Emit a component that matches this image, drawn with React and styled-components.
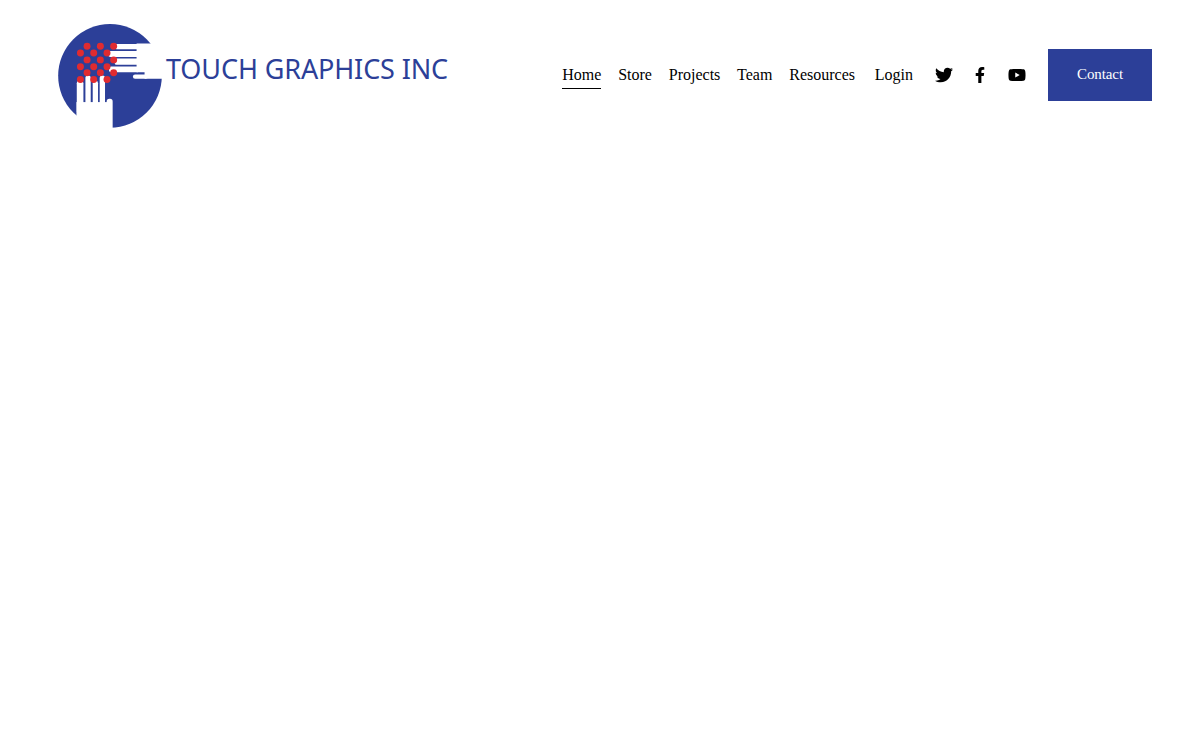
import React from 'react';
import styled, { createGlobalStyle } from 'styled-components';
import { FaTwitter, FaFacebookF, FaYoutube } from 'react-icons/fa';

const blue = '#2c3f98';

const GlobalStyle = createGlobalStyle`
  html, body {
    margin: 0;
    background: #fff;
  }
  body {
    height: 750px;
    overflow: hidden;
    font-family: "Liberation Serif", "Times New Roman", serif;
  }
`;

const Header = styled.header`
  display: flex;
  align-items: center;
  justify-content: space-between;
  height: 104px;
  margin-top: 23px;
  padding: 0 48px 0 58px;
`;

const Logo = styled.a`
  display: flex;
  align-items: flex-start;
  gap: 4px;
  margin-top: 2px;
  text-decoration: none;
`;

const LogoMark = styled.svg`
  display: block;
  width: 104px;
  height: 104px;
`;

const LogoName = styled.span`
  margin-top: 26px;
  color: ${blue};
  font-family: "Noto Sans", sans-serif;
  font-size: 27px;
  line-height: 37px;
  letter-spacing: -0.12px;
  white-space: nowrap;
`;

const Right = styled.div`
  display: flex;
  align-items: center;
`;

const Nav = styled.nav`
  display: flex;
  align-items: center;
  gap: 16.8px;
  padding-top: 4px;
`;

const NavLink = styled.a`
  margin-left: ${p => (p.$wide ? '3px' : '0')};
  padding-bottom: 3px;
  border-bottom: 1px solid ${p => (p.$active ? '#000' : 'transparent')};
  color: #000;
  font-size: 16px;
  line-height: 20px;
`;

const Socials = styled.div`
  display: flex;
  align-items: center;
  margin: 0 13px 0 12.5px;
`;

const SocialLink = styled.a`
  display: flex;
  align-items: center;
  justify-content: center;
  width: 36.5px;
  height: 20px;
  color: #000;
`;

const ContactButton = styled.a`
  display: flex;
  align-items: center;
  justify-content: center;
  box-sizing: border-box;
  width: 104px;
  height: 52px;
  padding-bottom: 2px;
  background: ${blue};
  color: #fff;
  font-size: 15px;
  letter-spacing: -0.1px;
`;

const dots = [
  [112, 92], [152, 92], [192, 92],
  [92, 112], [132, 112], [172, 112],
  [112, 133], [152, 133], [192, 133],
  [92, 154], [132, 154], [172, 154],
  [112, 172], [152, 172], [192, 172],
  [92, 192], [132, 192], [172, 192],
];

const upperFingers = [
  { x: 195, y: 85, h: 16 },
  { x: 176, y: 106, h: 18 },
  { x: 195, y: 129, h: 19 },
  { x: 178, y: 153, h: 17 },
];

const lowerFingers = [
  { x: 81, y: 196, w: 20 },
  { x: 107, y: 180, w: 16 },
  { x: 129, y: 196, w: 16 },
  { x: 150, y: 180, w: 16 },
];

// coordinates follow the logo at 3x, hence the odd viewBox
const HandsLogo = () => (
  <LogoMark viewBox="25 25 312 313" aria-hidden="true">
    <circle cx="181" cy="181" r="156" fill={blue} />
    <path d="M261 84H345V190H285V170H261Z" fill="#fff" />
    {upperFingers.map(f => (
      <rect key={f.y} x={f.x} y={f.y} width={270 - f.x} height={f.h} rx="6" fill="#fff" />
    ))}
    <rect x="250" y="177" width="45" height="13" rx="6.5" fill="#fff" />
    {lowerFingers.map(f => (
      <rect key={f.x} x={f.x} y={f.y} width={f.w} height="100" rx="7" fill="#fff" />
    ))}
    <path d="M80 260H172V345H80Z" fill="#fff" />
    <rect x="171" y="250" width="18" height="100" rx="8" fill="#fff" />
    {dots.map(([cx, cy]) => (
      <circle key={`${cx}-${cy}`} cx={cx} cy={cy} r="10.5" fill="#e02b30" />
    ))}
  </LogoMark>
);

const App = () => (
  <>
    <GlobalStyle />
    <Header>
      <Logo>
        <HandsLogo />
        <LogoName>TOUCH GRAPHICS INC</LogoName>
      </Logo>
      <Right>
        <Nav>
          <NavLink $active>Home</NavLink>
          <NavLink>Store</NavLink>
          <NavLink>Projects</NavLink>
          <NavLink>Team</NavLink>
          <NavLink>Resources</NavLink>
          <NavLink $wide>Login</NavLink>
        </Nav>
        <Socials>
          <SocialLink><FaTwitter size={18} /></SocialLink>
          <SocialLink><FaFacebookF size={16} /></SocialLink>
          <SocialLink><FaYoutube size={18} /></SocialLink>
        </Socials>
        <ContactButton>Contact</ContactButton>
      </Right>
    </Header>
  </>
);

export default App;
